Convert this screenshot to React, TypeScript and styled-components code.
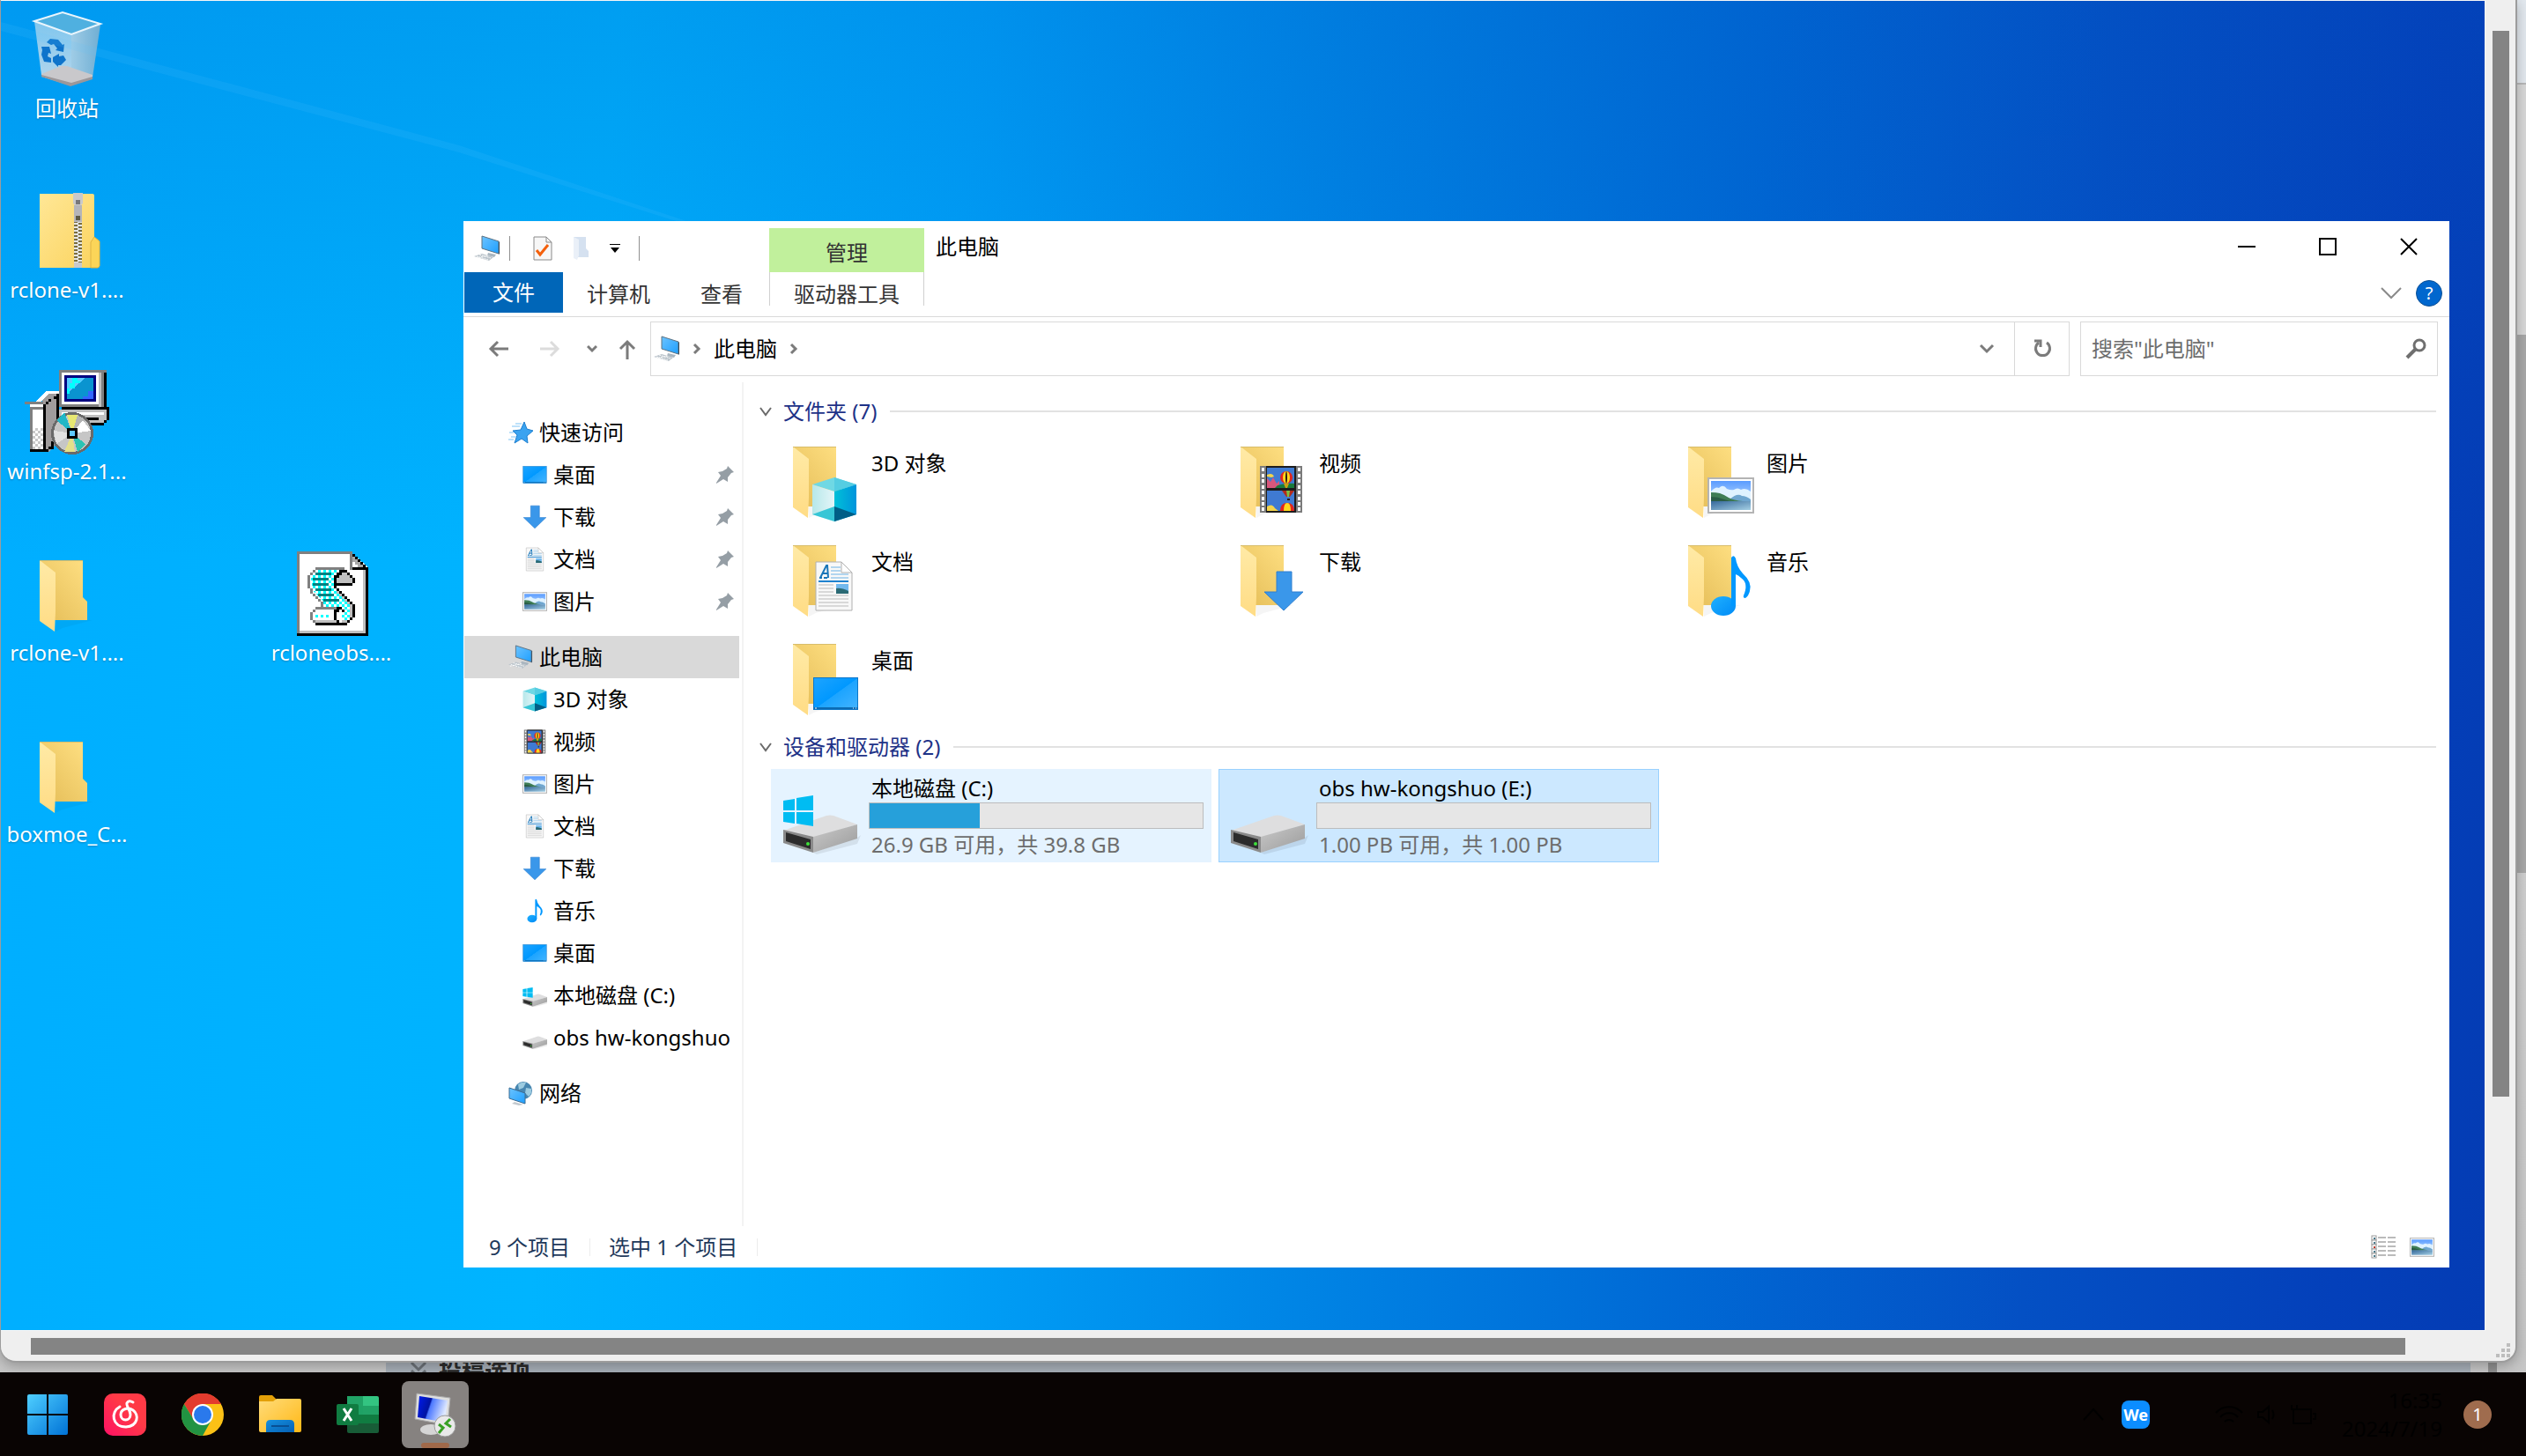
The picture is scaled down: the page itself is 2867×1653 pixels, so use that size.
import React from 'react';
import styled, { createGlobalStyle, css } from 'styled-components';

const Global = createGlobalStyle`
  *, *::before, *::after { box-sizing: border-box; }
  html, body, #root { height: 100%; }
  body {
    margin: 0;
    overflow: hidden;
    font-family: "Noto Sans", "Open Sans", "Noto Sans CJK SC", sans-serif;
    font-size: 24px;
    line-height: 32px;
    color: #000;
    background: #0a0504;
  }
  button, input { font: inherit; color: inherit; margin: 0; }
  svg { display: block; flex: none; }
`;

const bareButton = css`
  border: 0;
  padding: 0;
  background: none;
  display: flex;
  align-items: center;
  justify-content: center;
`;

/* ---------- Drawings ---------- */

const HiddenSvg = styled.svg`
  position: absolute;
`;

const Defs = () => (
  <HiddenSvg width="0" height="0" aria-hidden="true">
    <defs>
      <linearGradient id="folderBack" x1="0" y1="1" x2="1" y2="0">
        <stop offset="0.2" stopColor="#e9c35f" />
        <stop offset="1" stopColor="#ffe083" />
      </linearGradient>
      <linearGradient id="folderFlap" x1="0" y1="0" x2="0" y2="1">
        <stop offset="0" stopColor="#ffeaa6" />
        <stop offset="1" stopColor="#ffdc85" />
      </linearGradient>
      <linearGradient id="zipBody" x1="0" y1="0" x2="1" y2="1">
        <stop offset="0" stopColor="#ffe796" />
        <stop offset="1" stopColor="#fbd35d" />
      </linearGradient>
      <linearGradient id="screen" x1="0" y1="0" x2="1" y2="1">
        <stop offset="0" stopColor="#1ea4ff" />
        <stop offset="0.5" stopColor="#0098ff" />
        <stop offset="0.51" stopColor="#1ca4ff" />
        <stop offset="1" stopColor="#44b4ff" />
      </linearGradient>
      <linearGradient id="pcScreen" x1="0" y1="0" x2="1" y2="1">
        <stop offset="0" stopColor="#6cc3ff" />
        <stop offset="1" stopColor="#1e9fff" />
      </linearGradient>
      <linearGradient id="sky" x1="0" y1="0" x2="0" y2="1">
        <stop offset="0" stopColor="#5a9cff" />
        <stop offset="1" stopColor="#e4f5ff" />
      </linearGradient>
      <linearGradient id="lake" x1="0" y1="0" x2="1" y2="1">
        <stop offset="0" stopColor="#35689a" />
        <stop offset="1" stopColor="#a4cfe4" />
      </linearGradient>
      <linearGradient id="note" x1="0" y1="0" x2="1" y2="1">
        <stop offset="0" stopColor="#1fb0ff" />
        <stop offset="1" stopColor="#008bf6" />
      </linearGradient>
      <linearGradient id="cubeLeft" x1="0" y1="0" x2="1" y2="0">
        <stop offset="0" stopColor="#b6e8ea" />
        <stop offset="1" stopColor="#e4f5f8" />
      </linearGradient>
      <linearGradient id="cubeRight" x1="0" y1="0" x2="1" y2="0">
        <stop offset="0" stopColor="#00c0d8" />
        <stop offset="1" stopColor="#0094dc" />
      </linearGradient>
      <linearGradient id="driveSide" x1="0" y1="0" x2="1" y2="1">
        <stop offset="0" stopColor="#c9c9c9" />
        <stop offset="1" stopColor="#9b9b9b" />
      </linearGradient>
      <linearGradient id="binLeft" x1="0" y1="0" x2="0" y2="1">
        <stop offset="0" stopColor="#7fc6ee" />
        <stop offset="1" stopColor="#b7d7ec" />
      </linearGradient>
      <linearGradient id="binRight" x1="0" y1="0" x2="1" y2="0">
        <stop offset="0" stopColor="#9fcce6" />
        <stop offset="1" stopColor="#6faed3" />
      </linearGradient>
      <linearGradient id="start" x1="0" y1="0" x2="1" y2="1">
        <stop offset="0" stopColor="#4fcfff" />
        <stop offset="1" stopColor="#0072d6" />
      </linearGradient>
      <linearGradient id="netease" x1="1" y1="0" x2="0" y2="1">
        <stop offset="0.4" stopColor="#ff3a46" />
        <stop offset="1" stopColor="#ff1165" />
      </linearGradient>
      <linearGradient id="explorer" x1="0" y1="0" x2="1" y2="1">
        <stop offset="0" stopColor="#ffdc7a" />
        <stop offset="1" stopColor="#ffb816" />
      </linearGradient>
      <linearGradient id="explorerTray" x1="0" y1="0" x2="1" y2="1">
        <stop offset="0" stopColor="#1590e0" />
        <stop offset="1" stopColor="#0560b4" />
      </linearGradient>
      <linearGradient id="rdpScreen" x1="0" y1="0" x2="1" y2="0.3">
        <stop offset="0.1" stopColor="#001ae0" />
        <stop offset="0.45" stopColor="#0013a0" />
        <stop offset="0.5" stopColor="#4c78ff" />
        <stop offset="1" stopColor="#dfe9ff" />
      </linearGradient>
      <pattern id="cyanDots" width="2" height="2" patternUnits="userSpaceOnUse">
        <rect width="2" height="2" fill="#fff" />
        <rect width="1" height="1" fill="#00ffff" />
        <rect x="1" y="1" width="1" height="1" fill="#00ffff" />
      </pattern>
      <pattern id="greyDots" width="2" height="2" patternUnits="userSpaceOnUse">
        <rect width="2" height="2" fill="#fff" />
        <rect width="1" height="1" fill="#c8c8c8" />
        <rect x="1" y="1" width="1" height="1" fill="#c8c8c8" />
      </pattern>
    </defs>
  </HiddenSvg>
);

type IconProps = { size?: number };

const Scene = () => (
  <>
    <rect width="51" height="39" fill="#fff" stroke="#b4b4b4" strokeWidth="2" />
    <rect x="3" y="3" width="45" height="33" fill="url(#sky)" />
    <path d="M3 15q5-6 9-4q5-5 9 1q5 2 8 1q4-3 8 0q5-3 11 2v9H3z" fill="#dff2ff" />
    <path d="M24 24q9-8 14-4q5 0 10 4v2H24z" fill="#6fa6cf" />
    <path d="M3 16q6 0 10 1q6 2 10 5q6 3 16 4H3z" fill="#3f7d55" />
    <path d="M3 21q8 0 15 3q5 2 12 2H3z" fill="#2a5c46" />
    <rect x="3" y="26" width="45" height="10" fill="url(#lake)" />
  </>
);

const FilmStrip = () => (
  <>
    <rect width="48" height="53" fill="#7b7b7b" />
    {[2, 9, 15, 22, 28, 35, 41, 47].map((y) => (
      <g key={y} fill="#fff">
        <rect x="2" y={y} width="3" height="4" />
        <rect x="43" y={y} width="3" height="4" />
      </g>
    ))}
    <rect x="7" width="34" height="53" fill="#1c1c1c" />
    <rect x="8" y="2" width="31" height="23" fill="#3f7ad2" />
    <rect x="8" y="28" width="31" height="23" fill="#3f7ad2" />
    <path d="M8 14l4 4 3-5 4 7 3-3v8H8z" fill="#d8577c" />
    <path d="M8 10q6-3 8 2l-3 1-5-1z" fill="#f3d44b" />
    <path d="M20 22q10-3 19-2v5H17z" fill="#1a7a3c" />
    <ellipse cx="30" cy="13" rx="7" ry="7" fill="#e3261b" />
    <ellipse cx="30" cy="13" rx="4" ry="7" fill="#ffd81c" />
    <ellipse cx="30" cy="13" rx="1" ry="7" fill="#2a1a10" />
    <path d="M27 20h6l-2 5h-2z" fill="#c9a013" />
    <path d="M25 28h14l-5 7h-4z" fill="#b42a1a" />
    <path d="M30 28h4l-1 7h-2z" fill="#7ac043" />
    <rect x="31" y="37" width="3" height="2" fill="#301c10" />
    <path d="M8 46q6-4 9 2l4 3H8z" fill="#f3d44b" />
    <path d="M23 51q0-9 8-9t8 9z" fill="#e3261b" />
    <path d="M27 51q0-9 4-9t4 9z" fill="#ffd81c" />
  </>
);

const DocPage = () => (
  <>
    <path d="M1 1h29l12 12v43H1z" fill="#f8f8f8" stroke="#b0b0b0" strokeWidth="1" />
    <path d="M30 1v12h12z" fill="#fff" stroke="#b0b0b0" strokeWidth="1" />
    <path d="M5 19h3M10 19h4M6 19L13 5h1l1 14M8 14h7" fill="none" stroke="#1976b9" strokeWidth="2" />
    <path d="M18 7h11M18 11h11M18 15h20M18 19h20" stroke="#6bb2e6" strokeWidth="1" />
    <path d="M4 23h34" stroke="#1f83cf" strokeWidth="2" />
    <path d="M4 27h17M4 31h17M4 35h17M4 39h34M4 43h34M4 47h34M4 51h34" stroke="#b9b9b9" strokeWidth="1" />
    <rect x="24" y="26" width="14" height="11" fill="#72b9ee" />
    <path d="M24 31q6-1 14 3v3H24z" fill="#2b6a74" />
  </>
);

const Cube = () => (
  <>
    <path d="M0 8L25 0l25 8-25 8z" fill="#6fd8e4" />
    <path d="M25 0l25 8-25 8z" fill="#55cde2" />
    <path d="M0 8l25 8v34L0 42z" fill="url(#cubeLeft)" />
    <path d="M50 8l-25 8v34l25-8z" fill="url(#cubeRight)" />
    <path d="M0 42l25-9v17z" fill="#37c6d6" />
    <path d="M50 42l-25-9v17z" fill="#005e86" />
  </>
);

const Note = () => (
  <>
    <ellipse cx="14" cy="58" rx="14" ry="11" fill="url(#note)" />
    <path d="M23 58V3q3-4 5 1q1 9 8 17q11 10 8 20q-1 5-5 8q-3 0-2-3q6-14-3-20q-3-3-6-4v36z" fill="#0098ff" />
  </>
);

const Arrow = () => (
  <path d="M14 1h17v23h13L22 45 0 24h14z" fill="#3a97ea" stroke="#2f7fd0" strokeWidth="1" />
);

const DesktopPanel = () => (
  <>
    <rect x="0.5" y="0.5" width="50" height="36" fill="url(#screen)" stroke="#0b76c9" />
    <rect x="1" y="34" width="49" height="2" fill="#0b6bb4" />
    <path d="M45 35h1M48 35h1M2 35h2" stroke="#fff" />
  </>
);

const FolderShape = () => (
  <>
    <path d="M18 81l8-4 34-9H18z" fill="#000" opacity="0.04" />
    <path d="M0 0h49v42l5 5v21H0z" fill="url(#folderBack)" />
    <path d="M0 0l18 14v44l-1 23L0 69z" fill="url(#folderFlap)" />
    <path d="M0 0.5h49" stroke="#d8bd6b" strokeWidth="1" />
  </>
);

type Kind = 'cube' | 'video' | 'picture' | 'doc' | 'download' | 'music' | 'desktop';

const overlays: Record<Kind, { at: [number, number]; box: [number, number]; Art: React.FC }> = {
  cube: { at: [22, 35], box: [50, 50], Art: Cube },
  video: { at: [22, 22], box: [48, 53], Art: FilmStrip },
  picture: { at: [23, 36], box: [51, 39], Art: Scene },
  doc: { at: [25, 18], box: [43, 57], Art: DocPage },
  download: { at: [27, 29], box: [44, 46], Art: Arrow },
  music: { at: [26, 11], box: [44, 70], Art: Note },
  desktop: { at: [23, 38], box: [51, 37], Art: DesktopPanel },
};

const FolderTileIcon = ({ kind }: { kind: Kind }) => {
  const { at, Art } = overlays[kind];
  return (
    <svg width="96" height="96" viewBox="0 0 96 96">
      <g transform="translate(12 8)">
        <FolderShape />
        <g transform={`translate(${at[0]} ${at[1]})`}>
          <Art />
        </g>
      </g>
    </svg>
  );
};

const SmallKindIcon = ({ kind }: { kind: Kind }) => {
  const { box, Art } = overlays[kind];
  return (
    <svg width="28" height="28" viewBox={`-1 -1 ${box[0] + 2} ${box[1] + 2}`}>
      <Art />
    </svg>
  );
};

const DriveIcon = ({ size = 96, system }: IconProps & { system?: boolean }) => (
  <svg width={size} height={size} viewBox={size < 60 ? '0 8 84 84' : '0 0 96 96'}>
    <path d="M35 88l50-17 4-3-4 10-46 12z" fill="#000" opacity="0.08" />
    <path d="M1 63L50 46q4-1 8 0l27 10-50 15z" fill="#dededf" />
    <path d="M35 70l50-14v16L35 88z" fill="url(#driveSide)" />
    <path d="M1 62l34 8v18L1 77z" fill="#8a8a8a" />
    <path d="M4 65l28 8v11L4 75z" fill="#2c2c2c" />
    <circle cx="29" cy="78" r="2" fill="#3ee03a" />
    {system && (
      <path
        d="M1 29l13-2v13H1zM16 26l19-3v17H16zM1 42h13v13L1 53zM16 42h19v16l-19-3z"
        fill="#00bcf2"
      />
    )}
  </svg>
);

const PcIcon = ({ size = 30 }: IconProps) => (
  <svg width={size} height={size} viewBox="0 0 30 30">
    <path d="M9 1l19 6v14L9 15z" fill="url(#pcScreen)" stroke="#5d7282" strokeWidth="1" />
    <path d="M28 7l1 1v13l-1 1z" fill="#3c4d5a" />
    <path d="M16 20l9 2-2 3-8-2z" fill="#aab6c0" />
    <path d="M0 24l9-3 13 4-5 4z" fill="#bcc5cc" />
    <path d="M3 24l13 4M6 22l13 4M2 26l14-3" stroke="#fff" strokeWidth="1" strokeDasharray="2 1" />
  </svg>
);

const StarIcon = () => (
  <svg width="28" height="28" viewBox="0 0 28 28">
    <path d="M18 2l3 8 7 2-7 6 1 8-7-5-8 5 3-9-5-5 9-1z" fill="#3aa3f0" stroke="#1d7fd0" />
    <path d="M8 4h7M4 7h9M1 14h5M3 19h6M0 22h6" stroke="#7cc3f5" strokeWidth="1" />
  </svg>
);

const NetworkIcon = () => (
  <svg width="28" height="28" viewBox="0 0 28 28">
    <circle cx="17" cy="11" r="10" fill="#4786b0" />
    <path d="M11 4q4-3 9-2l-3 6-5 2zM20 8l6 1q1 6-3 9l-4-4z" fill="#9ccbe0" />
    <path d="M1 8l18 6v12L1 20z" fill="url(#pcScreen)" stroke="#3d6c92" />
    <path d="M7 24l10 3-5 1-8-2z" fill="#c3c9ce" />
  </svg>
);

const PinIcon = () => (
  <svg width="22" height="22" viewBox="0 0 22 22" fill="#959ea5">
    <path d="M14 1l7 7-3 1-4 5 0 5-5-3-8 5 0-1 5-8-3-4 5-1 5-3z" />
  </svg>
);

const Stroke = ({
  d,
  w = 24,
  h = 24,
  color = '#7b7b7b',
  width = 3,
}: {
  d: string;
  w?: number;
  h?: number;
  color?: string;
  width?: number;
}) => (
  <svg width={w} height={h} viewBox={`0 0 ${w} ${h}`} fill="none" stroke={color} strokeWidth={width}>
    <path d={d} />
  </svg>
);

const RecycleBin = () => (
  <svg width="96" height="96" viewBox="0 0 96 96">
    <path d="M11 16l42 15v58l-34-12z" fill="url(#binLeft)" />
    <path d="M86 20L53 31v58l24-9z" fill="url(#binRight)" />
    <path d="M19 76l22-9q6-1 10 1l26 9v3l-25 9-33-10z" fill="#c9c8cb" />
    <path d="M19 77l34 9 24-7v3l-25 8-33-11z" fill="#9b979a" />
    <path d="M11 16l32-10 43 13-33 12z" fill="#4fb0e0" stroke="#e9f5fc" strokeWidth="2" />
    <g fill="#0e74cb">
      <path d="M25 40l4-4 9 1 5 6 2-1-1 9-9-2 2-2-4-5-3 1z" />
      <path d="M19 45l9 0 2 8-3-1-1 4 4 2 0 5-8-1-3-8 1-5z" />
      <path d="M32 57l7-4v3l5-1 3 5-6 6h-3v2l-6-6z" />
    </g>
  </svg>
);

const ZipFolder = () => (
  <svg width="96" height="96" viewBox="0 0 96 96">
    <path d="M17 6h60q2 0 2 2v47l6 5v28q0 2-2 2H17z" fill="url(#zipBody)" />
    <path d="M79 55l6 5v28l-2 2h-8V61z" fill="#fbd558" stroke="#dfb440" strokeWidth="1" />
    <rect x="56" y="36" width="9" height="50" fill="#7a6d3e" />
    {Array.from({ length: 12 }, (_, i) => (
      <g key={i} fill="#e4e4e4">
        <rect x="56" y={39 + i * 4} width="5" height="2" />
        <rect x="60" y={37 + i * 4} width="5" height="2" />
      </g>
    ))}
    <path d="M55 5h11v12l-2 2h-7l-2-2z" fill="#c9c9cb" />
    <rect x="58" y="13" width="5" height="5" fill="#77777a" />
    <rect x="56" y="19" width="9" height="19" fill="#b5b5b9" />
    <rect x="58" y="31" width="5" height="5" fill="#5e5a45" />
    <rect x="56" y="84" width="9" height="6" fill="#c9c9cb" />
  </svg>
);

const DesktopFolder = () => (
  <svg width="96" height="96" viewBox="0 0 96 96">
    <g transform="translate(17 10)">
      <FolderShape />
    </g>
  </svg>
);

const Installer = () => (
  <svg width="96" height="96" viewBox="0 0 32 32" shapeRendering="crispEdges">
    <rect x="13" width="18" height="14" fill="#808080" />
    <rect x="14" y="1" width="14" height="12" fill="#fff" />
    <rect x="28" y="1" width="1" height="13" fill="#c0c0c0" />
    <rect x="30" y="1" width="1" height="14" fill="#000" />
    <rect x="15" y="2" width="12" height="10" fill="#000080" />
    <rect x="16" y="3" width="10" height="8" fill="#0a94d0" />
    <path d="M16 3h7l-7 6z" fill="#58c8ff" />
    <path d="M18 3h2v1h1v1h-2v2h-2v2h-1V7h1V5h1z" fill="#00ffff" />
    <path d="M26 7v4h-4v-1h2V8h2z" fill="#3366ff" />
    <rect x="14" y="14" width="17" height="1" fill="#000" />
    <rect x="13" y="15" width="18" height="5" fill="#c0c0c0" />
    <rect x="14" y="16" width="16" height="1" fill="#fff" />
    <rect x="23" y="18" width="5" height="1" fill="#000" />
    <path d="M31 14h1v5h-1v1h-1v1h-6v-1h6v-1h1z" fill="#000" />
    <path d="M5 11l3-3h5v19l-4 4H7V12z" fill="#a09c9c" />
    <path d="M8 8h5v1H9l-3 3H4z" fill="#fff" />
    <path d="M12 9h1v18h-1zM10 11h2v-1h-1v1H9v1H8v1h1v-1h1z" fill="#000" />
    <rect y="12" width="7" height="1" fill="#808080" />
    <rect x="2" y="13" width="5" height="18" fill="#fff" />
    <rect x="3" y="22" width="4" height="8" fill="url(#greyDots)" />
    <rect x="2" y="14" width="1" height="16" fill="#808080" />
    <rect x="2" y="14" width="5" height="1" fill="#808080" />
    <rect x="7" y="13" width="1" height="18" fill="#000" />
    <path d="M2 30h7v-1h1v-2h1v3H9v1H2z" fill="#000" />
    <circle cx="18" cy="24" r="8" fill="#6a6a6a" />
    <circle cx="18" cy="24" r="7" fill="#c6c6c6" />
    <path d="M18 24L12 19l3-3z" fill="#22b7c6" />
    <path d="M18 24l-2-7h4z" fill="#e8e873" />
    <path d="M18 24l2-7 3 2z" fill="#b4b4b4" />
    <path d="M18 24l4-5 3 4z" fill="#fff" />
    <path d="M18 24l5 4-3 3z" fill="#2bc3b4" />
    <path d="M18 24l1 7-4 0z" fill="#e4e08a" />
    <path d="M18 24l-6 4-1-5z" fill="#e2e2e2" />
    <rect x="16" y="22" width="4" height="4" fill="#000" />
    <rect x="17" y="23" width="2" height="2" fill="#5fcaff" />
  </svg>
);

const ScriptFile = () => (
  <svg width="96" height="96" viewBox="0 0 32 32" shapeRendering="crispEdges">
    <path d="M3 0h20l7 6v26H3z" fill="#fff" />
    <path d="M3 0h21v7h-1V1H4v30H3z" fill="#808080" />
    <path d="M28 7h1v24H4v-1h24z" fill="#c0c0c0" />
    <path d="M29 6h1v26H3v-1h26z" fill="#000" />
    <path d="M24 1h1v1h1v1h1v1h1v1h1v2h-5V6h4V5h-1V4h-1V3h-1V2h-1z" fill="#000" />
    <path d="M24 2h1v1h1v1h1v1h1v1h-2V5h-1V4h-1z" fill="#a8a8a8" />
    <path d="M10 7h9v1h-1v6l7 7v4l-2 2h-3v-4l-2-2h-5v-2l-4-4-1-7z" fill="url(#cyanDots)" />
    <path d="M9 22h9v4H9z" fill="#fff" />
    <path d="M9 24h7v1H9z" fill="url(#cyanDots)" />
    <path d="M10 8h6v1h-6zM9 10h6v1H9zM9 12h6v1H9zM10 14h6v1h-6zM11 16h6v1h-6zM13 18h6v1h-6z" fill="#008080" />
    <path d="M10 6h11v1H10zM9 7h1v1H9zM8 8h1v1H8zM7 9h1v5H7zM8 14h1v2H8zM9 16h1v1H9zM10 17h1v1h-1zM11 18h1v1h-1zM12 19h1v2h-1zM10 21h8v1h-8zM9 22h1v1H9zM8 23h1v3H8zM9 26h1v1H9z" fill="#808080" />
    <path d="M20 8h2l2 2v2h-6v-3z" fill="#c0c0c0" />
    <path d="M19 7h3v1h-2v1h-1v1h-1v4h-1v-5h1V8h1zM22 8h1v1h-1zM23 9h1v1h-1zM24 10h1v2h-1v1h-6v-1h6zM18 14h1v1h-1zM19 15h1v1h-1zM20 16h1v1h-1zM21 17h1v1h-1zM22 18h1v1h-1zM23 19h1v1h-1zM24 20h1v5h-1zM23 25h1v1h-1zM22 26h1v1h-1z" fill="#000" />
    <path d="M19 15h-1v1h1v1h1v1h1v1h1v1h1v5h1v-5h-1v-1h-1v-1h-1v-1h-1v-1h-1z" fill="#c0c0c0" />
    <path d="M18 21h2v1h1v1h-1v-1h-1v1h-1v3h1v1h1v1h-1v-1h-1v-1h-1v-4h1z" fill="#000" />
    <path d="M10 27h12v1H10z" fill="#000" />
    <path d="M10 26h8v1h-8zM20 26h2v1h-2z" fill="#c0c0c0" />
  </svg>
);

/* ---------- Desktop shell ---------- */

const Screen = styled.div`
  height: 100vh;
  display: grid;
  grid-template-rows: 1fr 95px;
`;

const Stage = styled.div`
  position: relative;
  overflow: hidden;
  background: #c4c4c4;
`;

const Backdrop = styled.div`
  position: absolute;
  inset: 0;
  display: flex;
  flex-direction: column;
  background: linear-gradient(#e2e8ee 94px, #b8b8b8 94px 96px, #d8d8d8 96px 400px, #c6c6c6 100%);
`;

const BackdropThumb = styled.div`
  width: 10px;
  height: 611px;
  margin: 380px 0 auto auto;
  background: #a8a8a8;
`;

const BackdropPanel = styled.div`
  position: relative;
  display: flex;
  align-items: center;
  gap: 12px;
  height: 36px;
  margin: 0 63px -16px 438px;
  padding-left: 26px;
  background: #a6aeb7;
  color: #2b2b2b;
  font-size: 26px;
  font-weight: 700;
  &::after {
    content: '';
    position: absolute;
    top: 0;
    right: -30px;
    width: 10px;
    height: 100%;
    background: #8f8f8f;
  }
`;

const RemoteWindow = styled.div`
  position: absolute;
  inset: 0 10px 11px 0;
  display: grid;
  grid-template: 1fr 34px / 1fr 34px;
  border: solid #9c9c9c;
  border-width: 0 2px 2px 1px;
  border-radius: 0 0 18px 18px;
  overflow: hidden;
  background: #efefef;
  box-shadow: 0 4px 14px rgba(0, 0, 0, 0.25);
`;

const VTrack = styled.div`
  padding: 35px 7px 0 8px;
`;

const VThumb = styled.div`
  height: 82%;
  background: #848484;
`;

const HTrack = styled.div`
  padding: 8px 91px 7px 34px;
`;

const HThumb = styled.div`
  height: 19px;
  background: #848484;
`;

const Grip = styled.div`
  display: flex;
  align-items: flex-end;
  justify-content: flex-end;
  padding: 0 6px 4px 0;
`;

const Wallpaper = styled.div`
  position: relative;
  min-width: 0;
  border-top: 1px solid #f6f6f6;
  border-bottom: 1px solid #f6f6f6;
  border-right: 1px solid #f6f6f6;
  background:
    linear-gradient(180deg, rgba(0, 80, 190, 0.22), rgba(0, 120, 220, 0) 42%),
    linear-gradient(94deg, #00aeff 0%, #00b4ff 24%, #00a4fa 38%, #0086e6 53%, #0068d4 69%, #0450c4 82%, #0440ba 94%, #043cb4 100%);
`;

const Streak = styled.svg`
  position: absolute;
  left: 0;
  top: 24px;
  opacity: 0.12;
`;

const IconGrid = styled.div`
  display: grid;
  grid-template-columns: 150px 150px;
  grid-auto-rows: 206px;
  column-gap: 150px;
  width: 450px;
  padding-top: 7px;
`;

const DesktopItem = styled.button<{ $column?: number; $row: number }>`
  ${bareButton}
  flex-direction: column;
  justify-content: flex-start;
  gap: 3px;
  grid-column: ${(p) => p.$column ?? 1};
  grid-row: ${(p) => p.$row};
  color: #fff;
  white-space: nowrap;
  text-shadow: 0 1px 2px rgba(0, 0, 0, 0.25);
`;

const Taskbar = styled.footer`
  display: flex;
  align-items: center;
  justify-content: space-between;
  padding: 0 39px 0 16px;
  background: #090403;
`;

const TaskList = styled.div`
  display: flex;
  gap: 12px;
`;

const TaskButton = styled.button<{ $active?: boolean }>`
  ${bareButton}
  position: relative;
  width: 76px;
  height: 76px;
  border-radius: 8px;
  background: ${(p) => (p.$active ? '#868280' : 'transparent')};
  &::after {
    content: '';
    position: absolute;
    bottom: 0;
    left: 22px;
    width: 32px;
    height: 6px;
    border-radius: 3px;
    background: ${(p) => (p.$active ? '#a0694a' : 'transparent')};
  }
`;

const Tray = styled.div`
  display: flex;
  align-items: center;
  color: #000;
`;

const TrayIcons = styled.div`
  display: flex;
  align-items: center;
  gap: 16px;
  margin: 0 28px 0 74px;
`;

const WeIcon = styled.button`
  ${bareButton}
  width: 32px;
  height: 32px;
  margin-left: 20px;
  border-radius: 8px;
  background: #0c8dff;
  color: #fff;
  font-size: 18px;
  font-weight: 700;
`;

const Clock = styled.time`
  text-align: right;
  margin-right: 24px;
`;

const NoticeBadge = styled.button`
  ${bareButton}
  width: 32px;
  height: 32px;
  border-radius: 50%;
  background: #9f6c4e;
  color: #fff;
  font-size: 20px;
`;

/* ---------- Explorer window ---------- */

const Explorer = styled.section`
  position: absolute;
  inset: 250px 40px 71px 525px;
  display: flex;
  flex-direction: column;
  background: #fff;
`;

const TitleBar = styled.header`
  display: flex;
  align-items: center;
  height: 58px;
`;

const QuickBar = styled.div`
  display: flex;
  align-items: center;
  width: 347px;
  padding: 4px 0 0 12px;
`;

const Rule = styled.span<{ $before?: number; $after?: number }>`
  width: 1px;
  height: 28px;
  margin: 0 ${(p) => p.$after ?? 0}px 0 ${(p) => p.$before ?? 0}px;
  background: #8f8f8f;
`;

const QuickButton = styled.button<{ $narrow?: boolean }>`
  ${bareButton}
  width: ${(p) => (p.$narrow ? 32 : 44)}px;
  height: 32px;
`;

const ContextTab = styled.div`
  display: flex;
  align-items: center;
  justify-content: center;
  align-self: flex-end;
  width: 176px;
  height: 50px;
  padding-top: 6px;
  background: #c1f09c;
  color: #333;
`;

const WindowTitle = styled.h1`
  flex: 1;
  margin: 0;
  padding-left: 13px;
  font-size: 24px;
  font-weight: 400;
`;

const CaptionButton = styled.button`
  ${bareButton}
  width: 92px;
  height: 58px;
`;

const Ribbon = styled.nav`
  display: flex;
  height: 51px;
  border-bottom: 1px solid #dadada;
  color: #333;
`;

const RibbonTab = styled.button<{ $width: number; $file?: boolean; $context?: boolean }>`
  ${bareButton}
  width: ${(p) => p.$width}px;
  height: 46px;
  padding-top: 4px;
  white-space: nowrap;
  ${(p) => p.$file && css`margin-left: 1px; padding: 0; background: #0066b8; color: #fff;`}
  ${(p) =>
    p.$context &&
    css`
      height: 38px;
      padding-top: 12px;
      border: solid #d0d0d0;
      border-width: 0 1px;
    `}
`;

const RibbonTools = styled.div`
  display: flex;
  align-items: center;
  gap: 16px;
  margin-left: auto;
  padding: 0 8px 3px 0;
`;

const ToolButton = styled.button`
  ${bareButton}
`;

const HelpButton = styled.button`
  ${bareButton}
  width: 30px;
  height: 30px;
  border: 1px solid #0a4f94;
  border-radius: 50%;
  background: #0067ce;
  color: #fff;
  font-size: 20px;
`;

const AddressRow = styled.div`
  display: flex;
  height: 74px;
  padding: 5px 13px 7px 16px;
`;

const NavButton = styled.button<{ $width: number }>`
  ${bareButton}
  width: ${(p) => p.$width}px;
  height: 62px;
`;

const AddressBox = styled.div`
  flex: 1;
  display: flex;
  align-items: center;
  border: 1px solid #d9d9d9;
  padding-left: 3px;
`;

const Crumb = styled.button`
  ${bareButton}
`;

const AddressTools = styled.div`
  display: flex;
  margin-left: auto;
`;

const BoxButton = styled.button<{ $divided?: boolean }>`
  ${bareButton}
  width: 62px;
  height: 60px;
  border-left: ${(p) => (p.$divided ? '1px solid #d9d9d9' : '0')};
`;

const SearchBox = styled.label`
  display: flex;
  align-items: center;
  width: 406px;
  margin-left: 12px;
  padding: 0 12px;
  border: 1px solid #d9d9d9;
`;

const SearchInput = styled.input`
  flex: 1;
  min-width: 0;
  padding: 0;
  border: 0;
  outline: 0;
  background: none;
  &::placeholder { color: #6d6d6d; opacity: 1; }
`;

const Body = styled.div`
  flex: 1;
  min-height: 0;
  display: flex;
`;

const Sidebar = styled.nav`
  width: 318px;
  padding: 33px 3px 0 1px;
  border-right: 2px solid #f3f3f3;
`;

const TreeGroup = styled.ul`
  margin: 0 0 15px;
  padding: 0;
  list-style: none;
`;

const TreeButton = styled.button<{ $child?: boolean; $selected?: boolean }>`
  ${bareButton}
  justify-content: flex-start;
  gap: 7px;
  width: 100%;
  height: 48px;
  padding: 0 5px 0 ${(p) => (p.$child ? 66 : 50)}px;
  background: ${(p) => (p.$selected ? '#d9d9d9' : 'transparent')};
  white-space: nowrap;
  overflow: hidden;
`;

const TreeLabel = styled.span`
  flex: 1;
  text-align: left;
`;

const Content = styled.main`
  flex: 1;
  min-width: 0;
  padding: 17px 15px 0 16px;
`;

const GroupHeader = styled.h2`
  display: flex;
  align-items: center;
  gap: 11px;
  height: 32px;
  margin: 0 0 9px;
  color: #1e3287;
  font-size: 24px;
  font-weight: 400;
  &::after {
    content: '';
    flex: 1;
    height: 2px;
    margin-left: 4px;
    background: #e2e2e2;
  }
`;

const TileGrid = styled.div`
  display: grid;
  grid-template-columns: repeat(auto-fill, 500px);
  gap: 6px 8px;
  margin: 0 0 10px 15px;
`;

const Tile = styled.button<{ $state?: 'hover' | 'selected' }>`
  ${bareButton}
  align-items: flex-start;
  justify-content: flex-start;
  gap: 2px;
  height: 106px;
  padding: 6px 8px 2px 12px;
  border: 1px solid ${(p) => (p.$state === 'selected' ? '#99d1ff' : p.$state === 'hover' ? '#e5f3ff' : 'transparent')};
  background: ${(p) => (p.$state === 'selected' ? '#cce8ff' : p.$state === 'hover' ? '#e5f3ff' : 'transparent')};
  text-align: left;
`;

const TileName = styled.span`
  padding: 11px 0 0 3px;
`;

const DriveInfo = styled.span`
  flex: 1;
  display: flex;
  flex-direction: column;
  line-height: 30px;
`;

const DriveText = styled.span<{ $muted?: boolean }>`
  padding-left: 3px;
  color: ${(p) => (p.$muted ? '#6d6d6d' : '#000')};
  white-space: nowrap;
`;

const Meter = styled.span`
  display: block;
  height: 30px;
  margin: 1px 0 3px;
  border: 1px solid #bcbcbc;
  background: #e6e6e6;
`;

const MeterFill = styled.span`
  display: block;
  height: 100%;
  background: #26a0da;
`;

const StatusBar = styled.footer`
  display: flex;
  align-items: center;
  height: 47px;
  padding: 0 17px 0 29px;
  color: #1e395b;
`;

const StatusItem = styled.span`
  padding-right: 22px;
  margin-right: 21px;
  border-right: 1px solid #ececec;
  line-height: 20px;
`;

const ViewButtons = styled.div`
  display: flex;
  gap: 16px;
  margin-left: auto;
`;

/* ---------- Data ---------- */

const desktopItems = [
  { label: '回收站', row: 1, Art: RecycleBin },
  { label: 'rclone-v1....', row: 2, Art: ZipFolder },
  { label: 'winfsp-2.1...', row: 3, Art: Installer },
  { label: 'rclone-v1....', row: 4, Art: DesktopFolder },
  { label: 'rcloneobs....', row: 4, column: 2, Art: ScriptFile },
  { label: 'boxmoe_C...', row: 5, Art: DesktopFolder },
];

const pinned: [Kind, string][] = [
  ['desktop', '桌面'],
  ['download', '下载'],
  ['doc', '文档'],
  ['picture', '图片'],
];

const library: [Kind, string][] = [
  ['cube', '3D 对象'],
  ['video', '视频'],
  ['picture', '图片'],
  ['doc', '文档'],
  ['download', '下载'],
  ['music', '音乐'],
  ['desktop', '桌面'],
];

const drives = [
  { name: '本地磁盘 (C:)', info: '26.9 GB 可用，共 39.8 GB', used: 33, system: true, state: 'hover' as const },
  { name: 'obs hw-kongshuo (E:)', info: '1.00 PB 可用，共 1.00 PB', used: 0, system: false, state: 'selected' as const },
];

/* ---------- Parts ---------- */

const TreeRow = ({
  icon,
  label,
  child,
  selected,
  pin,
}: {
  icon: React.ReactNode;
  label: string;
  child?: boolean;
  selected?: boolean;
  pin?: boolean;
}) => (
  <li>
    <TreeButton $child={child} $selected={selected}>
      {icon}
      <TreeLabel>{label}</TreeLabel>
      {pin && <PinIcon />}
    </TreeButton>
  </li>
);

const ExplorerWindow = () => (
  <Explorer>
    <TitleBar>
      <QuickBar>
        <PcIcon />
        <Rule $before={10} $after={15} />
        <QuickButton aria-label="属性">
          <svg width="22" height="28" viewBox="0 0 22 28">
            <path d="M1 1h14l6 6v20H1z" fill="#f7f7f7" stroke="#8a8a8a" />
            <path d="M15 1v6h6" fill="none" stroke="#8a8a8a" />
            <path d="M4 16l4 5 9-11" fill="none" stroke="#f4600c" strokeWidth="3" />
          </svg>
        </QuickButton>
        <QuickButton aria-label="新建文件夹">
          <svg width="20" height="28" viewBox="0 0 20 28">
            <path d="M1 1h14v13l3 3v7H1z" fill="#d5e1f0" />
            <path d="M1 1l6 3v18l-2 5-4-2z" fill="#eaf0f8" />
          </svg>
        </QuickButton>
        <QuickButton $narrow aria-label="自定义快速访问工具栏">
          <svg width="12" height="10" viewBox="0 0 12 10">
            <path d="M0 0h12v1H0zM1 4h10L6 10z" fill="#000" />
          </svg>
        </QuickButton>
        <Rule $before={11} />
      </QuickBar>
      <ContextTab>管理</ContextTab>
      <WindowTitle>此电脑</WindowTitle>
      <CaptionButton aria-label="最小化">
        <Stroke d="M2 12h20" color="#000" width={2} />
      </CaptionButton>
      <CaptionButton aria-label="最大化">
        <Stroke d="M3 3h18v18H3z" color="#000" width={2} />
      </CaptionButton>
      <CaptionButton aria-label="关闭">
        <Stroke d="M3 3l18 18M21 3L3 21" color="#000" width={2} />
      </CaptionButton>
    </TitleBar>

    <Ribbon>
      <RibbonTab $width={112} $file>文件</RibbonTab>
      <RibbonTab $width={126}>计算机</RibbonTab>
      <RibbonTab $width={108}>查看</RibbonTab>
      <RibbonTab $width={176} $context>驱动器工具</RibbonTab>
      <RibbonTools>
        <ToolButton aria-label="展开功能区">
          <Stroke d="M1 6l11 11L23 6" color="#8a8a8a" width={2} />
        </ToolButton>
        <HelpButton aria-label="帮助">?</HelpButton>
      </RibbonTools>
    </Ribbon>

    <AddressRow>
      <NavButton $width={48} aria-label="后退">
        <Stroke d="M23 12H3M11 4l-8 8 8 8" />
      </NavButton>
      <NavButton $width={68} aria-label="前进">
        <Stroke d="M1 12h20M13 4l8 8-8 8" color="#dcdcdc" />
      </NavButton>
      <NavButton $width={28} aria-label="最近浏览的位置">
        <Stroke d="M1 2l5 5 5-5" w={12} h={10} />
      </NavButton>
      <NavButton $width={52} aria-label="上移">
        <Stroke d="M12 24V4M4 12l8-8 8 8" />
      </NavButton>
      <AddressBox>
        <PcIcon />
        <NavButton $width={38} aria-label="展开">
          <Stroke d="M3 2l5 5-5 5" w={12} h={14} />
        </NavButton>
        <Crumb>此电脑</Crumb>
        <NavButton $width={38} aria-label="展开此电脑">
          <Stroke d="M3 2l5 5-5 5" w={12} h={14} />
        </NavButton>
        <AddressTools>
          <BoxButton aria-label="以前的位置">
            <Stroke d="M2 2l7 7 7-7" w={18} h={12} />
          </BoxButton>
          <BoxButton $divided aria-label="刷新">
            <svg width="22" height="24" viewBox="0 0 22 24" fill="none" stroke="#7b7b7b" strokeWidth="3">
              <path d="M16 5a8 8 0 1 1-9 0" />
              <path d="M2 3h7v7" />
            </svg>
          </BoxButton>
        </AddressTools>
      </AddressBox>
      <SearchBox>
        <SearchInput type="search" placeholder={'搜索"此电脑"'} aria-label="搜索" />
        <svg width="24" height="24" viewBox="0 0 24 24" fill="none" stroke="#6f6f6f">
          <circle cx="16" cy="8" r="6" strokeWidth="3" />
          <path d="M12 12L2 22" strokeWidth="4" />
        </svg>
      </SearchBox>
    </AddressRow>

    <Body>
      <Sidebar aria-label="导航窗格">
        <TreeGroup>
          <TreeRow icon={<StarIcon />} label="快速访问" />
          {pinned.map(([kind, label]) => (
            <TreeRow key={kind} icon={<SmallKindIcon kind={kind} />} label={label} child pin />
          ))}
        </TreeGroup>
        <TreeGroup>
          <TreeRow icon={<PcIcon size={28} />} label="此电脑" selected />
          {library.map(([kind, label]) => (
            <TreeRow key={kind} icon={<SmallKindIcon kind={kind} />} label={label} child />
          ))}
          <TreeRow icon={<DriveIcon size={28} system />} label="本地磁盘 (C:)" child />
          <TreeRow icon={<DriveIcon size={28} />} label="obs hw-kongshuo" child />
        </TreeGroup>
        <TreeGroup>
          <TreeRow icon={<NetworkIcon />} label="网络" />
        </TreeGroup>
      </Sidebar>

      <Content>
        <GroupHeader>
          <Stroke d="M3 5l6 8 6-8" w={18} h={18} color="#6a6a6a" width={2} />
          文件夹 (7)
        </GroupHeader>
        <TileGrid>
          {library.map(([kind, label]) => (
            <Tile key={kind}>
              <FolderTileIcon kind={kind} />
              <TileName>{label}</TileName>
            </Tile>
          ))}
        </TileGrid>
        <GroupHeader>
          <Stroke d="M3 5l6 8 6-8" w={18} h={18} color="#6a6a6a" width={2} />
          设备和驱动器 (2)
        </GroupHeader>
        <TileGrid>
          {drives.map((d) => (
            <Tile key={d.name} $state={d.state}>
              <DriveIcon system={d.system} />
              <DriveInfo>
                <DriveText>{d.name}</DriveText>
                <Meter>
                  <MeterFill style={{ width: `${d.used}%` }} />
                </Meter>
                <DriveText $muted>{d.info}</DriveText>
              </DriveInfo>
            </Tile>
          ))}
        </TileGrid>
      </Content>
    </Body>

    <StatusBar>
      <StatusItem>9 个项目</StatusItem>
      <StatusItem>选中 1 个项目</StatusItem>
      <ViewButtons>
        <ToolButton aria-label="详细信息">
          <svg width="28" height="28" viewBox="0 0 28 28">
            {[1, 6, 11, 16, 21].map((y, i) => (
              <g key={y}>
                <rect x="1" y={y} width="5" height="5" fill="#fff" stroke="#9a9a9a" />
                <rect x="3" y={y + 2} width="2" height="2" fill={i === 2 ? '#c0392b' : '#4a7a8c'} />
                <path d={`M8 ${y + 2}h9M19 ${y + 2}h9`} stroke="#777" />
              </g>
            ))}
          </svg>
        </ToolButton>
        <ToolButton aria-label="大缩略图">
          <SmallKindIcon kind="picture" />
        </ToolButton>
      </ViewButtons>
    </StatusBar>
  </Explorer>
);

const TaskbarArea = () => (
  <Taskbar>
    <TaskList>
      <TaskButton aria-label="开始">
        <svg width="48" height="48" viewBox="0 0 48 48">
          <path d="M3 1h20v22H1V3q0-2 2-2zM25 1h20q2 0 2 2v20H25zM1 25h22v22H3q-2 0-2-2zM25 25h22v20q0 2-2 2H25z" fill="url(#start)" />
        </svg>
      </TaskButton>
      <TaskButton aria-label="网易云音乐">
        <svg width="48" height="48" viewBox="0 0 48 48" fill="none">
          <rect width="48" height="48" rx="10" fill="url(#netease)" />
          <path
            d="M33 10q-5-3-7 1c-1 3 4 8 4 13c0 8-11 8-11 0c0-6 8-9 14-5c7 5 6 18-8 19c-16 0-18-17-7-23"
            stroke="#fff"
            strokeWidth="3"
            strokeLinecap="round"
          />
        </svg>
      </TaskButton>
      <TaskButton aria-label="Google Chrome">
        <svg width="48" height="48" viewBox="0 0 48 48">
          <circle cx="24" cy="24" r="24" fill="#fbc116" />
          <path d="M3 12A24 24 0 0 1 45 12H24L14 30z" fill="#e33b2e" />
          <path d="M3 12a24 24 0 0 0 21 36l10-18-20 0z" fill="#229342" />
          <circle cx="24" cy="24" r="12" fill="#fff" />
          <circle cx="24" cy="24" r="10" fill="#2a79ec" />
        </svg>
      </TaskButton>
      <TaskButton aria-label="文件资源管理器">
        <svg width="48" height="48" viewBox="0 0 48 48">
          <path d="M0 4q0-2 2-2h13l5 5v6H0z" fill="#e3a008" />
          <path d="M0 9h16l4-3h26q2 0 2 2v34q0 2-2 2H2q-2 0-2-2z" fill="url(#explorer)" />
          <path d="M8 44v-9q0-5 5-5h22q5 0 5 5v9z" fill="url(#explorerTray)" />
          <rect x="14" y="36" width="20" height="2" fill="#084f94" />
        </svg>
      </TaskButton>
      <TaskButton aria-label="Excel">
        <svg width="48" height="48" viewBox="0 0 48 48">
          <path d="M12 3h18v11H12z" fill="#21a366" />
          <path d="M30 3h16q2 0 2 2v9H30z" fill="#33c481" />
          <path d="M12 14h18v10H12z" fill="#1fa265" />
          <path d="M30 14h18v10H30z" fill="#21a366" />
          <path d="M12 24h36v10H12z" fill="#107c41" />
          <path d="M12 34h36v9q0 2-2 2H14q-2 0-2-2z" fill="#185c37" />
          <rect y="12" width="25" height="24" rx="2" fill="#107c41" />
          <path d="M8 17l9 14M17 17L8 31" stroke="#fff" strokeWidth="3" />
        </svg>
      </TaskButton>
      <TaskButton $active aria-label="远程桌面连接">
        <svg width="52" height="52" viewBox="0 0 52 52">
          <ellipse cx="21" cy="43" rx="12" ry="6" fill="#d5d5d5" />
          <path d="M5 2l38 5-3 31L3 31z" fill="#dedede" stroke="#a6a6a6" />
          <path d="M8 5l32 5-3 25L6 29z" fill="url(#rdpScreen)" />
          <circle cx="37" cy="39" r="12" fill="#e9e9e9" stroke="#9a9a9a" />
          <path d="M30 37l5 4-5 6M43 31l-5 5 6 4" fill="none" stroke="#38a024" strokeWidth="3" />
        </svg>
      </TaskButton>
    </TaskList>
    <Tray>
      <ToolButton aria-label="显示隐藏的图标">
        <Stroke d="M1 18l11-12 11 12" color="#000" width={2} />
      </ToolButton>
      <WeIcon>We</WeIcon>
      <TrayIcons>
        <Stroke d="M1 12a20 20 0 0 1 30 0M6 17a13 13 0 0 1 20 0M11 22a7 7 0 0 1 10 0" w={32} h={28} color="#000" width={2} />
        <Stroke d="M1 10h5l7-6v18l-7-6H1zM17 8q3 5 0 10" w={20} h={26} color="#000" width={2} />
        <Stroke d="M5 8h20v16H5zM27 13h3v6h-3M3 3v5h6V3" w={32} h={28} color="#000" width={2} />
      </TrayIcons>
      <Clock>
        16:35
        <br />
        2024/7/19
      </Clock>
      <NoticeBadge aria-label="1 条新通知">1</NoticeBadge>
    </Tray>
  </Taskbar>
);

export default function App() {
  return (
    <Screen>
      <Global />
      <Defs />
      <Stage>
        <Backdrop>
          <BackdropThumb />
          <BackdropPanel>
            <Stroke d="M3 3l8 8 8-8M3 12l8 8 8-8" w={22} h={24} color="#6c7278" />
            投稿选项
          </BackdropPanel>
        </Backdrop>
        <RemoteWindow>
          <Wallpaper>
            <Streak width="1200" height="420" viewBox="0 0 1200 420">
              <path d="M0 0L520 140 1000 300 520 148 0 10z" fill="#5cc4ff" />
            </Streak>
            <IconGrid>
              {desktopItems.map(({ label, row, column, Art }) => (
                <DesktopItem key={`${row}-${column ?? 1}`} $row={row} $column={column}>
                  <Art />
                  {label}
                </DesktopItem>
              ))}
            </IconGrid>
            <ExplorerWindow />
          </Wallpaper>
          <VTrack>
            <VThumb />
          </VTrack>
          <HTrack>
            <HThumb />
          </HTrack>
          <Grip>
            <svg width="16" height="16" viewBox="0 0 16 16" fill="#bdbdbd">
              <path d="M12 0h4v4h-4zM6 6h4v4H6zM12 6h4v4h-4zM0 12h4v4H0zM6 12h4v4H6zM12 12h4v4h-4z" />
            </svg>
          </Grip>
        </RemoteWindow>
      </Stage>
      <TaskbarArea />
    </Screen>
  );
}
